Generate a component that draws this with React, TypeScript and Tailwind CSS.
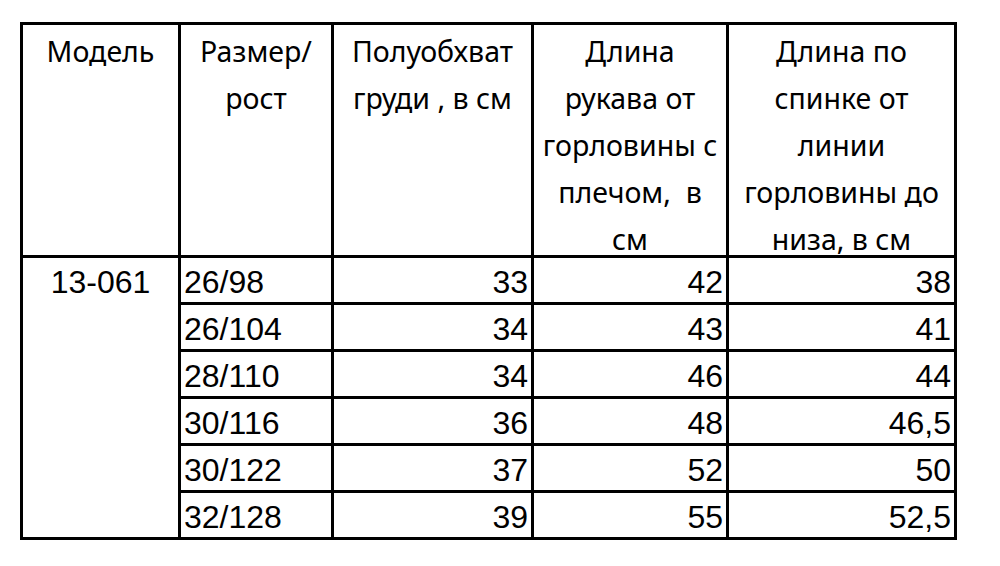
const header = [
  ["Модель"],
  ["Размер/", "рост"],
  ["Полуобхват", "груди , в см"],
  ["Длина", "рукава от", "горловины с", "плечом,  в", "см"],
  ["Длина по", "спинке от", "линии", "горловины до", "низа, в см"],
]

const rows = [
  ["26/98", "33", "42", "38"],
  ["26/104", "34", "43", "41"],
  ["28/110", "34", "46", "44"],
  ["30/116", "36", "48", "46,5"],
  ["30/122", "37", "52", "50"],
  ["32/128", "39", "55", "52,5"],
]

export default function App() {
  return (
    <div className="w-[1000px] h-[566px] bg-white pt-[22px] pl-[20px] text-black">
      <table className="table-fixed border-collapse border-[3px] border-black w-[934px]">
        <colgroup>
          <col className="w-[158px]" />
          <col className="w-[153px]" />
          <col className="w-[200px]" />
          <col className="w-[195px]" />
          <col className="w-[228px]" />
        </colgroup>
        <thead>
          <tr className="h-[233px]">
            {header.map((lines, i) => (
              <th
                key={i}
                className="border-[3px] border-black p-0 align-top font-normal text-center font-['Noto_Sans',sans-serif] text-[28.5px]"
              >
                <div className="h-[229px] pt-[3px] leading-[47px] whitespace-pre">
                  {lines.map((l, j) => (
                    <div key={j}>{l}</div>
                  ))}
                </div>
              </th>
            ))}
          </tr>
        </thead>
        <tbody className="font-['Liberation_Sans',Arial,sans-serif] text-[32px]">
          {rows.map((r, i) => (
            <tr key={i} className="h-[47px]">
              {i === 0 && (
                <td rowSpan={6} className="border-[3px] border-black align-top text-center p-0 pt-[4px] leading-[40px]">
                  13-061
                </td>
              )}
              <td className="border-[3px] border-black px-[3px] pt-[4px] pb-0 leading-[40px] text-left">{r[0]}</td>
              <td className="border-[3px] border-black px-[3px] pt-[4px] pb-0 leading-[40px] text-right">{r[1]}</td>
              <td className="border-[3px] border-black px-[3px] pt-[4px] pb-0 leading-[40px] text-right">{r[2]}</td>
              <td className="border-[3px] border-black px-[3px] pt-[4px] pb-0 leading-[40px] text-right">{r[3]}</td>
            </tr>
          ))}
        </tbody>
      </table>
    </div>
  )
}
